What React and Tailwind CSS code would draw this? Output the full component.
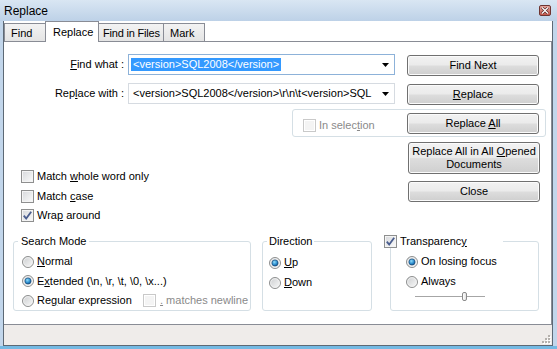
import React from "react";

const btn = "w-[132px] flex items-center justify-center rounded-[3px] border border-[#707070] bg-[linear-gradient(to_bottom,#f2f2f2_0%,#ebebeb_48%,#dddddd_52%,#cfcfcf_100%)] shadow-[inset_0_0_0_1px_#fbfbfb] leading-[13px] text-center";
const group = "rounded-[3px] border border-[#d5dfe5]";

const U = ({ children }) => <span className="underline underline-offset-[1px]">{children}</span>;

const Check = ({ checked, disabled }) => (
  <span className={disabled
    ? "w-[13px] h-[13px] shrink-0 border border-[#c9c9c9] bg-[#f4f4f4] shadow-[inset_0_0_0_1px_#ffffff]"
    : "w-[13px] h-[13px] shrink-0 border border-[#8e8f8f] bg-[linear-gradient(135deg,#d6d8db,#fbfbfb)] shadow-[inset_0_0_0_1px_#f4f4f4] flex items-center justify-center"}>
    {checked && (
      <svg width="11" height="11" viewBox="0 0 11 11">
        <polyline points="1.8,5.6 4.2,8.6 9.2,1.8" fill="none" stroke="#4a5d8e" strokeWidth="1.8" />
      </svg>
    )}
  </span>
);

const Radio = ({ checked }) => (
  <svg width="12" height="12" viewBox="0 0 12 12" className="shrink-0">
    <defs>
      <linearGradient id="rbg" x1="0" y1="0" x2="1" y2="1">
        <stop offset="0" stopColor="#c9cbcd" />
        <stop offset="1" stopColor="#fbfbfb" />
      </linearGradient>
      <radialGradient id="rdot" cx="0.4" cy="0.35" r="0.7">
        <stop offset="0" stopColor="#8fdcfb" />
        <stop offset="0.6" stopColor="#2c8ccc" />
        <stop offset="1" stopColor="#12497e" />
      </radialGradient>
    </defs>
    <circle cx="6" cy="6" r="5.5" fill="url(#rbg)" stroke="#8e8f8f" />
    <circle cx="6" cy="6" r="4.3" fill="none" stroke="#f3f3f3" strokeWidth="0.8" />
    {checked && <circle cx="6" cy="6" r="3.1" fill="url(#rdot)" stroke="#1b4f80" strokeWidth="0.7" />}
  </svg>
);

const Arrow = () => (
  <svg width="7" height="4" viewBox="0 0 7 4" className="shrink-0">
    <polygon points="0,0 7,0 3.5,4" fill="#000" />
  </svg>
);

const Combo = ({ focus, children }) => (
  <div className={focus
    ? "ml-[4px] w-[267px] h-[21px] border border-[#8db2d9] bg-white flex items-center pl-[2px] pr-[5px]"
    : "ml-[4px] w-[267px] h-[21px] border border-[#d6dbe1] bg-white flex items-center pl-[2px] pr-[5px]"}>
    <div className="flex-1 overflow-hidden whitespace-nowrap">{children}</div>
    <Arrow />
  </div>
);

const Tab = ({ w, pl, active, children }) => (
  <div className={active
    ? "h-[21px] -mb-px -ml-px relative z-10 bg-white border-t border-l border-r border-[#898c95] flex items-center"
    : "h-[18px] -ml-px bg-[linear-gradient(to_bottom,#f3f3f3,#e4e4e4)] border-t border-l border-r border-[#898c95] flex items-center pt-[2px] whitespace-nowrap"}
    style={{ width: w, paddingLeft: pl }}>
    {children}
  </div>
);

export default function App() {
  return (
    <div className="w-[557px] h-[349px] overflow-hidden bg-[#c2d6eb] flex flex-col font-['Liberation_Sans',Arial,sans-serif] text-[11px] leading-[13px] text-black">
      {/* title bar */}
      <div className="h-[21px] shrink-0 flex items-center justify-between pl-[4px] pr-[6px] bg-[linear-gradient(to_bottom,#d9e6f3,#bdd1e7)]">
        <span className="text-[12px] pt-[2px]">Replace</span>
        <div className="w-[12px] h-[11px] rounded-[2px] border border-[#6e3430] bg-[linear-gradient(to_bottom,#e4a59d,#c3574c)] flex items-center justify-center">
          <svg width="8" height="7" viewBox="0 0 8 7">
            <path d="M1 0.5 L7 6.5 M7 0.5 L1 6.5" stroke="#5a2623" strokeWidth="2.6" />
            <path d="M1 0.5 L7 6.5 M7 0.5 L1 6.5" stroke="#ffffff" strokeWidth="1.3" />
          </svg>
        </div>
      </div>

      {/* client */}
      <div className="ml-[3px] mr-[4px] flex-1 flex flex-col bg-white border-l border-r border-b border-[#5d6975]">
        <div className="h-[20px] shrink-0 flex items-end pl-[1px]">
          <Tab w={42} pl={6}>Find</Tab>
          <Tab w={54} pl={7} active>Replace</Tab>
          <Tab w={66} pl={4}><span className="tracking-[-0.2px]">Find in Files</span></Tab>
          <Tab w={42} pl={6}>Mark</Tab>
        </div>

        <div className="h-[284px] shrink-0 border-t border-b border-r border-[#898c95] flex flex-col">
          {/* find what */}
          <div className="mt-[12px] h-[21px] flex items-start">
            <div className="w-[120px] h-[21px] flex items-center justify-end whitespace-nowrap"><span><U>F</U>ind what :</span></div>
            <Combo focus>
              <span className="bg-[#3399ff] text-white px-[2px] py-[1px]">&lt;version&gt;SQL2008&lt;/version&gt;</span>
            </Combo>
            <button className={btn + " ml-[12px] mt-[1px] h-[21px] border-[#3c7fb1] shadow-[inset_0_0_0_1px_#9ee3fb]"}><span>Find Next</span></button>
          </div>

          {/* replace with */}
          <div className="mt-[8px] h-[21px] flex items-start">
            <div className="w-[120px] h-[21px] flex items-center justify-end whitespace-nowrap"><span>Rep<U>l</U>ace with :</span></div>
            <Combo>
              <span className="pl-[2px]">&lt;version&gt;SQL2008&lt;/version&gt;\r\n\t&lt;version&gt;SQL</span>
            </Combo>
            <button className={btn + " ml-[12px] mt-[1px] h-[21px]"}><span><U>R</U>eplace</span></button>
          </div>

          {/* in selection */}
          <div className={group + " mt-[5px] ml-[288px] w-[254px] h-[28px] flex items-start justify-between pr-[6px]"}>
            <div className="ml-[10px] mt-[9px] flex items-center gap-[3px] text-[#8a8a8a]">
              <Check disabled />
              <span>In selec<U>t</U>ion</span>
            </div>
            <button className={btn + " mt-[3px] h-[21px]"}><span>Replace <U>A</U>ll</span></button>
          </div>

          {/* options + buttons */}
          <div className="mt-[5px] h-[93px] flex items-start justify-between pr-[11px]">
            <div className="ml-[17px] mt-[28px] flex flex-col gap-[6.5px]">
              <div className="flex items-center gap-[3px]"><Check /><span>Match <U>w</U>hole word only</span></div>
              <div className="flex items-center gap-[3px]"><Check /><span>Match <U>c</U>ase</span></div>
              <div className="flex items-center gap-[3px]"><Check checked /><span>Wra<U>p</U> around</span></div>
            </div>
            <div className="flex flex-col gap-[7px]">
              <button className={btn + " h-[32px] flex-col"}>
                <span>Replace All in All <U>O</U>pened</span>
                <span>Documents</span>
              </button>
              <button className={btn + " h-[21px]"}><span>Close</span></button>
            </div>
          </div>

          {/* groups */}
          <div className="flex items-start">
            <fieldset className={group + " ml-[9px] w-[238px] h-[76px]"}>
              <legend className="ml-[4px] px-[3px] leading-[13px]">Search Mode</legend>
              <div className="pl-[8px] pt-[7px] flex flex-col gap-[6.5px]">
                <div className="flex items-center gap-[3px]"><Radio /><span><U>N</U>ormal</span></div>
                <div className="flex items-center gap-[3px]"><Radio checked /><span>E<U>x</U>tended (\n, \r, \t, \0, \x...)</span></div>
                <div className="flex items-center whitespace-nowrap">
                  <Radio />
                  <span className="ml-[3px] w-[106px] shrink-0">Re<U>g</U>ular expression</span>
                  <Check disabled />
                  <span className="ml-[4px] shrink-0 text-[#8a8a8a]"><U>.</U> matches newline</span>
                </div>
              </div>
            </fieldset>

            <fieldset className={group + " ml-[11px] w-[110px] h-[76px]"}>
              <legend className="ml-[4px] px-[2px] leading-[13px]">Direction</legend>
              <div className="pl-[6px] pt-[8px] flex flex-col gap-[7px]">
                <div className="flex items-center gap-[3px]"><Radio checked /><span><U>U</U>p</span></div>
                <div className="flex items-center gap-[3px]"><Radio /><span><U>D</U>own</span></div>
              </div>
            </fieldset>

            <fieldset className={group + " ml-[18px] w-[149px] h-[76px]"}>
              <legend className="-ml-[9px] w-[121px] px-[2px] flex items-center gap-[3px] leading-[13px]">
                <Check checked />
                <span>Transparenc<U>y</U></span>
              </legend>
              <div className="pl-[15px] pt-[7px] flex flex-col gap-[7px]">
                <div className="flex items-center gap-[3px]"><Radio checked /><span>On losing focus</span></div>
                <div className="flex items-center gap-[3px]"><Radio /><span>Always</span></div>
              </div>
              <div className="ml-[24px] mt-[4px] h-[9px] flex items-center">
                <div className="w-[47px] h-[2px] border-t border-[#a6a6a6] border-b border-b-[#ffffff] bg-[#dcdcdc]" />
                <div className="w-[5px] h-[9px] rounded-[2px] border border-[#8a8a8a] bg-[linear-gradient(to_right,#ffffff,#e2e2e2)]" />
                <div className="w-[18px] h-[2px] border-t border-[#a6a6a6] border-b border-b-[#ffffff] bg-[#dcdcdc]" />
              </div>
            </fieldset>
          </div>
        </div>

        {/* bottom strip */}
        <div className="flex-1 bg-[#efecea] flex items-end justify-end pr-[1px] pb-[1px]">
          <svg width="9" height="9" viewBox="0 0 9 9">
            {[[6, 0], [3, 3], [6, 3], [0, 6], [3, 6], [6, 6]].map(([x, y], i) => (
              <g key={i}>
                <rect x={x + 1} y={y + 1} width="2" height="2" fill="#ffffff" />
                <rect x={x} y={y} width="2" height="2" fill="#b5b1ad" />
              </g>
            ))}
          </svg>
        </div>
      </div>
      <div className="h-[3px] shrink-0 bg-[#74b9e3]" />
    </div>
  );
}
